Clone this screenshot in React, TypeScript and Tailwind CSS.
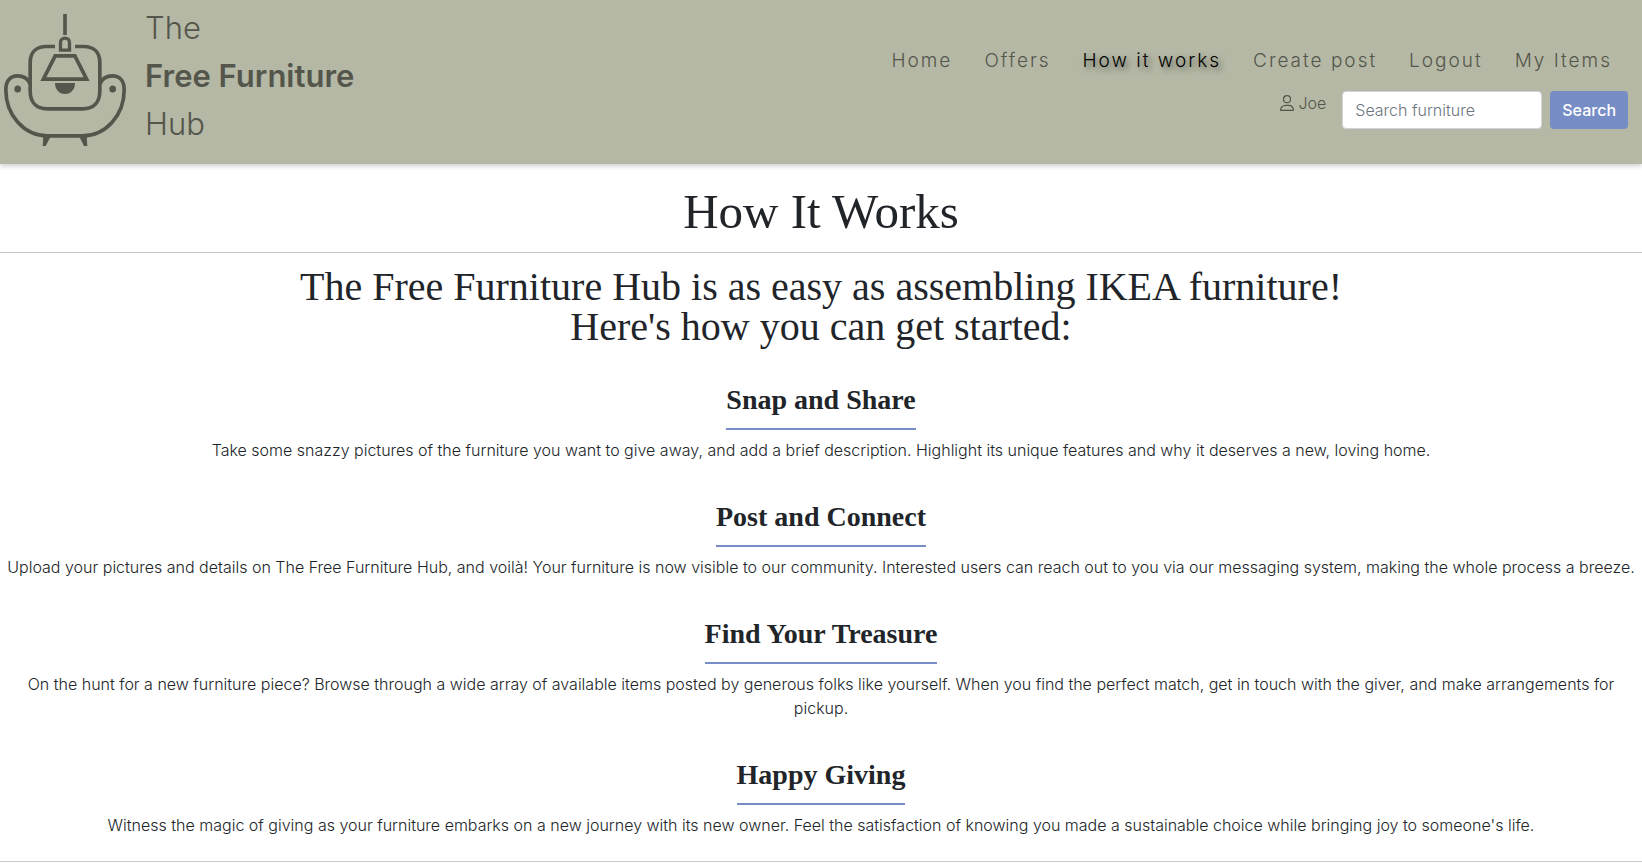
import React from "react";

type NavItem = { label: string; active?: boolean };

const navItems: NavItem[] = [
  { label: "Home" },
  { label: "Offers" },
  { label: "How it works", active: true },
  { label: "Create post" },
  { label: "Logout" },
  { label: "My Items" },
];

const steps = [
  {
    title: "Snap and Share",
    text: "Take some snazzy pictures of the furniture you want to give away, and add a brief description. Highlight its unique features and why it deserves a new, loving home.",
  },
  {
    title: "Post and Connect",
    text: "Upload your pictures and details on The Free Furniture Hub, and voilà! Your furniture is now visible to our community. Interested users can reach out to you via our messaging system, making the whole process a breeze.",
  },
  {
    title: "Find Your Treasure",
    text: "On the hunt for a new furniture piece? Browse through a wide array of available items posted by generous folks like yourself. When you find the perfect match, get in touch with the giver, and make arrangements for pickup.",
  },
  {
    title: "Happy Giving",
    text: "Witness the magic of giving as your furniture embarks on a new journey with its new owner. Feel the satisfaction of knowing you made a sustainable choice while bringing joy to someone's life.",
  },
];

function Logo() {
  return (
    <svg viewBox="0 0 390 450" className="h-[150px] w-[130px] shrink-0" fill="none" stroke="#54564c" strokeWidth="11" aria-hidden="true">
      <path d="M195 42V105" />
      <path d="M181.500 150.500V128C181.500 110 208.500 110 208.500 128V150.500Z" strokeWidth="10" />
      <path d="M165 139.500H139C108 139.500 90.500 158 90.500 188V272C90.500 306 108 326.500 142 326.500H248C282 326.500 299.500 306 299.500 272V188C299.500 158 282 139.500 251 139.500H225" />
      <path d="M165.500 167.500H224.500L260 237.500H130Z" />
      <path d="M165 249H225C225 268 213 282 195 282S165 268 165 249Z" fill="#54564c" stroke="none" />
      <path d="M90 252C84 236 70 227.500 52 227.500C30 227.500 17.500 244 17.500 270C17.500 345 72 407.500 142 407.500H248C318 407.500 372.500 345 372.500 270C372.500 244 360 227.500 338 227.500C320 227.500 306 236 300 252" />
      <ellipse cx="53" cy="267" rx="10" ry="10.500" fill="#54564c" stroke="none" />
      <ellipse cx="338" cy="267" rx="10" ry="10.500" fill="#54564c" stroke="none" />
      <path d="M130 408H153L137 438H128Z" fill="#54564c" stroke="none" />
      <path d="M237 408H260L262 438H252Z" fill="#54564c" stroke="none" />
    </svg>
  );
}

function UserIcon() {
  return (
    <svg viewBox="0 0 14 16" className="h-4 w-3.5" fill="none" stroke="currentColor" strokeWidth="1.200" aria-hidden="true">
      <circle cx="7" cy="4.200" r="3.500" />
      <path d="M.6 15.400C.6 12.200 2.800 10.300 5.600 10.300H8.400C11.200 10.300 13.400 12.200 13.400 15.400Z" strokeLinejoin="round" />
    </svg>
  );
}

export default function App() {
  return (
    <div className="bg-white font-['Inter',sans-serif] text-base font-light text-[#212529]">
      <header className="flex items-start justify-between bg-[#b5b8a5] pb-3.5 text-[#54564c] shadow-[0_2px_5px_rgba(0,0,0,0.2)]">
        <a href="#home" className="flex items-start gap-[15px]">
          <Logo />
          <span className="flex flex-col pt-1 text-[31px] leading-[48px]">
            <span>The</span>
            <strong className="font-semibold">Free Furniture</strong>
            <span>Hub</span>
          </span>
        </a>
        <div className="flex flex-col items-end gap-3 pt-[43px] pr-3.5">
          <nav className="flex gap-8 pr-4 text-[19px] leading-9 tracking-[2px]">
            {navItems.map((item) => (
              <a
                key={item.label}
                href="#"
                aria-current={item.active ? "page" : undefined}
                className={item.active ? "text-black [text-shadow:3px_3px_6px_#54564c]" : ""}
              >
                {item.label}
              </a>
            ))}
          </nav>
          <form className="flex items-start" onSubmit={(e) => e.preventDefault()}>
            <a href="#" className="mr-4 flex items-center gap-1">
              <UserIcon />
              Joe
            </a>
            <input
              type="search"
              aria-label="Search furniture"
              placeholder="Search furniture"
              className="mr-2 h-[38px] w-[200px] rounded border border-[#ced4da] bg-white px-3 font-light placeholder:text-[#6c757d]"
            />
            <button type="submit" className="h-[38px] rounded bg-[#778dc5] px-3 font-medium text-white">
              Search
            </button>
          </form>
        </div>
      </header>

      <main className="text-center">
        <h1 className="border-b border-[#c8c9ca] pt-5 pb-3 font-['Liberation_Serif',serif] text-[49px] leading-[56px] font-normal">
          How It Works
        </h1>
        <h2 className="pt-3.5 font-['Liberation_Serif',serif] text-[40px] leading-10 font-normal">
          The Free Furniture Hub is as easy as assembling IKEA furniture!
          <br />
          Here's how you can get started:
        </h2>
        <div className="flex flex-col gap-[37px] border-b border-[#c8c9ca] px-1 pt-[35px] pb-6">
          {steps.map((step) => (
            <section key={step.title}>
              <h3 className="mx-auto mb-2 w-fit border-b-2 border-[#778dc5] pb-2.5 font-['Liberation_Serif',serif] text-[28px] leading-9 font-bold">
                {step.title}
              </h3>
              <p className="leading-6">{step.text}</p>
            </section>
          ))}
        </div>
      </main>
    </div>
  );
}
